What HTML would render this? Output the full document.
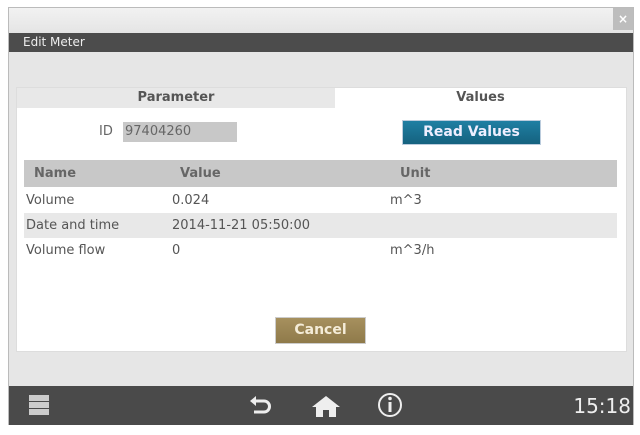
<!DOCTYPE html>
<html><head><style>
*{margin:0;padding:0;box-sizing:border-box}
body{width:640px;height:435px;background:#fff;font-family:"DejaVu Sans","Liberation Sans",sans-serif;position:relative;overflow:hidden;color:#555}
.win{position:absolute;left:8px;top:7px;width:626px;height:418px;background:#e6e6e6;border:1px solid #bbb}
.top{position:absolute;left:0;top:0;width:624px;height:26px;background:linear-gradient(#f2f2f2,#e4e4e4)}
.x{position:absolute;right:0;top:0;width:20px;height:22px;background:#bdbdbd;color:#fff;font-weight:bold;font-size:12px;text-align:center;line-height:22px}
.title{position:absolute;left:0;top:25px;width:624px;height:19px;background:#4c4c4c;color:#eee;font-size:12px;line-height:19px;padding-left:14px}
.panel{position:absolute;left:7px;top:79px;width:611px;height:265px;background:#fff;border:1px solid #ddd}
.tab{position:absolute;top:0;height:20px;font-weight:bold;font-size:13px;text-align:center;line-height:20px;color:#555}
.t1{left:0;width:318px;background:#e8e8e8}
.t2{left:318px;width:291px;background:#fff}
.id{position:absolute;left:82px;top:36px;font-size:13px;color:#666}
.idbox{position:absolute;left:106px;top:34px;width:114px;height:20px;background:#c8c8c8;color:#666;font-size:13px;line-height:20px;padding-left:2px}
.rv{position:absolute;left:385px;top:32px;width:139px;height:25px;background:linear-gradient(#1f7fa3,#15627f);border:1px solid #bcd;color:#eef;font-weight:bold;font-size:14px;text-align:center;line-height:23px}
.tbl{position:absolute;left:7px;width:593px;font-size:13px;color:#555;height:25px;line-height:25px}
.tbl span{position:absolute}
.hd{top:72px;height:27px;background:#c8c8c8;font-weight:bold;color:#666;line-height:27px}
.cancel{position:absolute;left:258px;top:229px;width:91px;height:27px;background:linear-gradient(#a6905e,#8f7a4a);border:1px solid #ccc;color:#f4ecd8;font-weight:bold;font-size:14px;text-align:center;line-height:25px}
.bar{position:absolute;left:0;top:378px;width:624px;height:39px;background:#4a4a4a}
.clock{position:absolute;right:2px;top:8px;color:#eee;font-size:20px}
.m{position:absolute;left:20px;width:20px;height:6px;background:#ccc}
</style></head><body>
<div class="win">
<div class="top"><div class="x">×</div></div>
<div class="title">Edit Meter</div>
<div class="panel">
<div class="tab t1">Parameter</div><div class="tab t2">Values</div>
<div class="id">ID</div><div class="idbox">97404260</div>
<div class="rv">Read Values</div>
<div class="tbl hd"><span style="left:10px">Name</span><span style="left:156px">Value</span><span style="left:376px">Unit</span></div>
<div class="tbl" style="top:100px"><span style="left:2px">Volume</span><span style="left:148px">0.024</span><span style="left:366px">m^3</span></div>
<div class="tbl" style="top:125px;background:#e8e8e8"><span style="left:2px">Date and time</span><span style="left:148px">2014-11-21 05:50:00</span></div>
<div class="tbl" style="top:150px"><span style="left:2px">Volume flow</span><span style="left:148px">0</span><span style="left:366px">m^3/h</span></div>
<div class="cancel">Cancel</div>
</div>
<div class="bar">
<div class="m" style="top:9px"></div><div class="m" style="top:16px"></div><div class="m" style="top:23px"></div>
<svg style="position:absolute;left:240px;top:8px" width="24" height="24" viewBox="0 0 24 24"><path d="M4 7 H15 A5.5 5.5 0 0 1 15 18 H5" fill="none" stroke="#eee" stroke-width="3"/><path d="M1 7 L7 2 L7 12 Z" fill="#eee"/></svg>
<svg style="position:absolute;left:302px;top:8px" width="30" height="24" viewBox="0 0 30 24"><path d="M15 2 L29 13 H25 V23 H18 V16 H12 V23 H5 V13 H1 Z" fill="#eee"/></svg>
<svg style="position:absolute;left:368px;top:6px" width="26" height="26" viewBox="0 0 26 26"><circle cx="13" cy="13" r="11" fill="none" stroke="#eee" stroke-width="2"/><rect x="11.5" y="10" width="3" height="10" fill="#eee"/><circle cx="13" cy="6.5" r="1.8" fill="#eee"/></svg>
<div class="clock">15:18</div>
</div>
</div>
</body></html>
